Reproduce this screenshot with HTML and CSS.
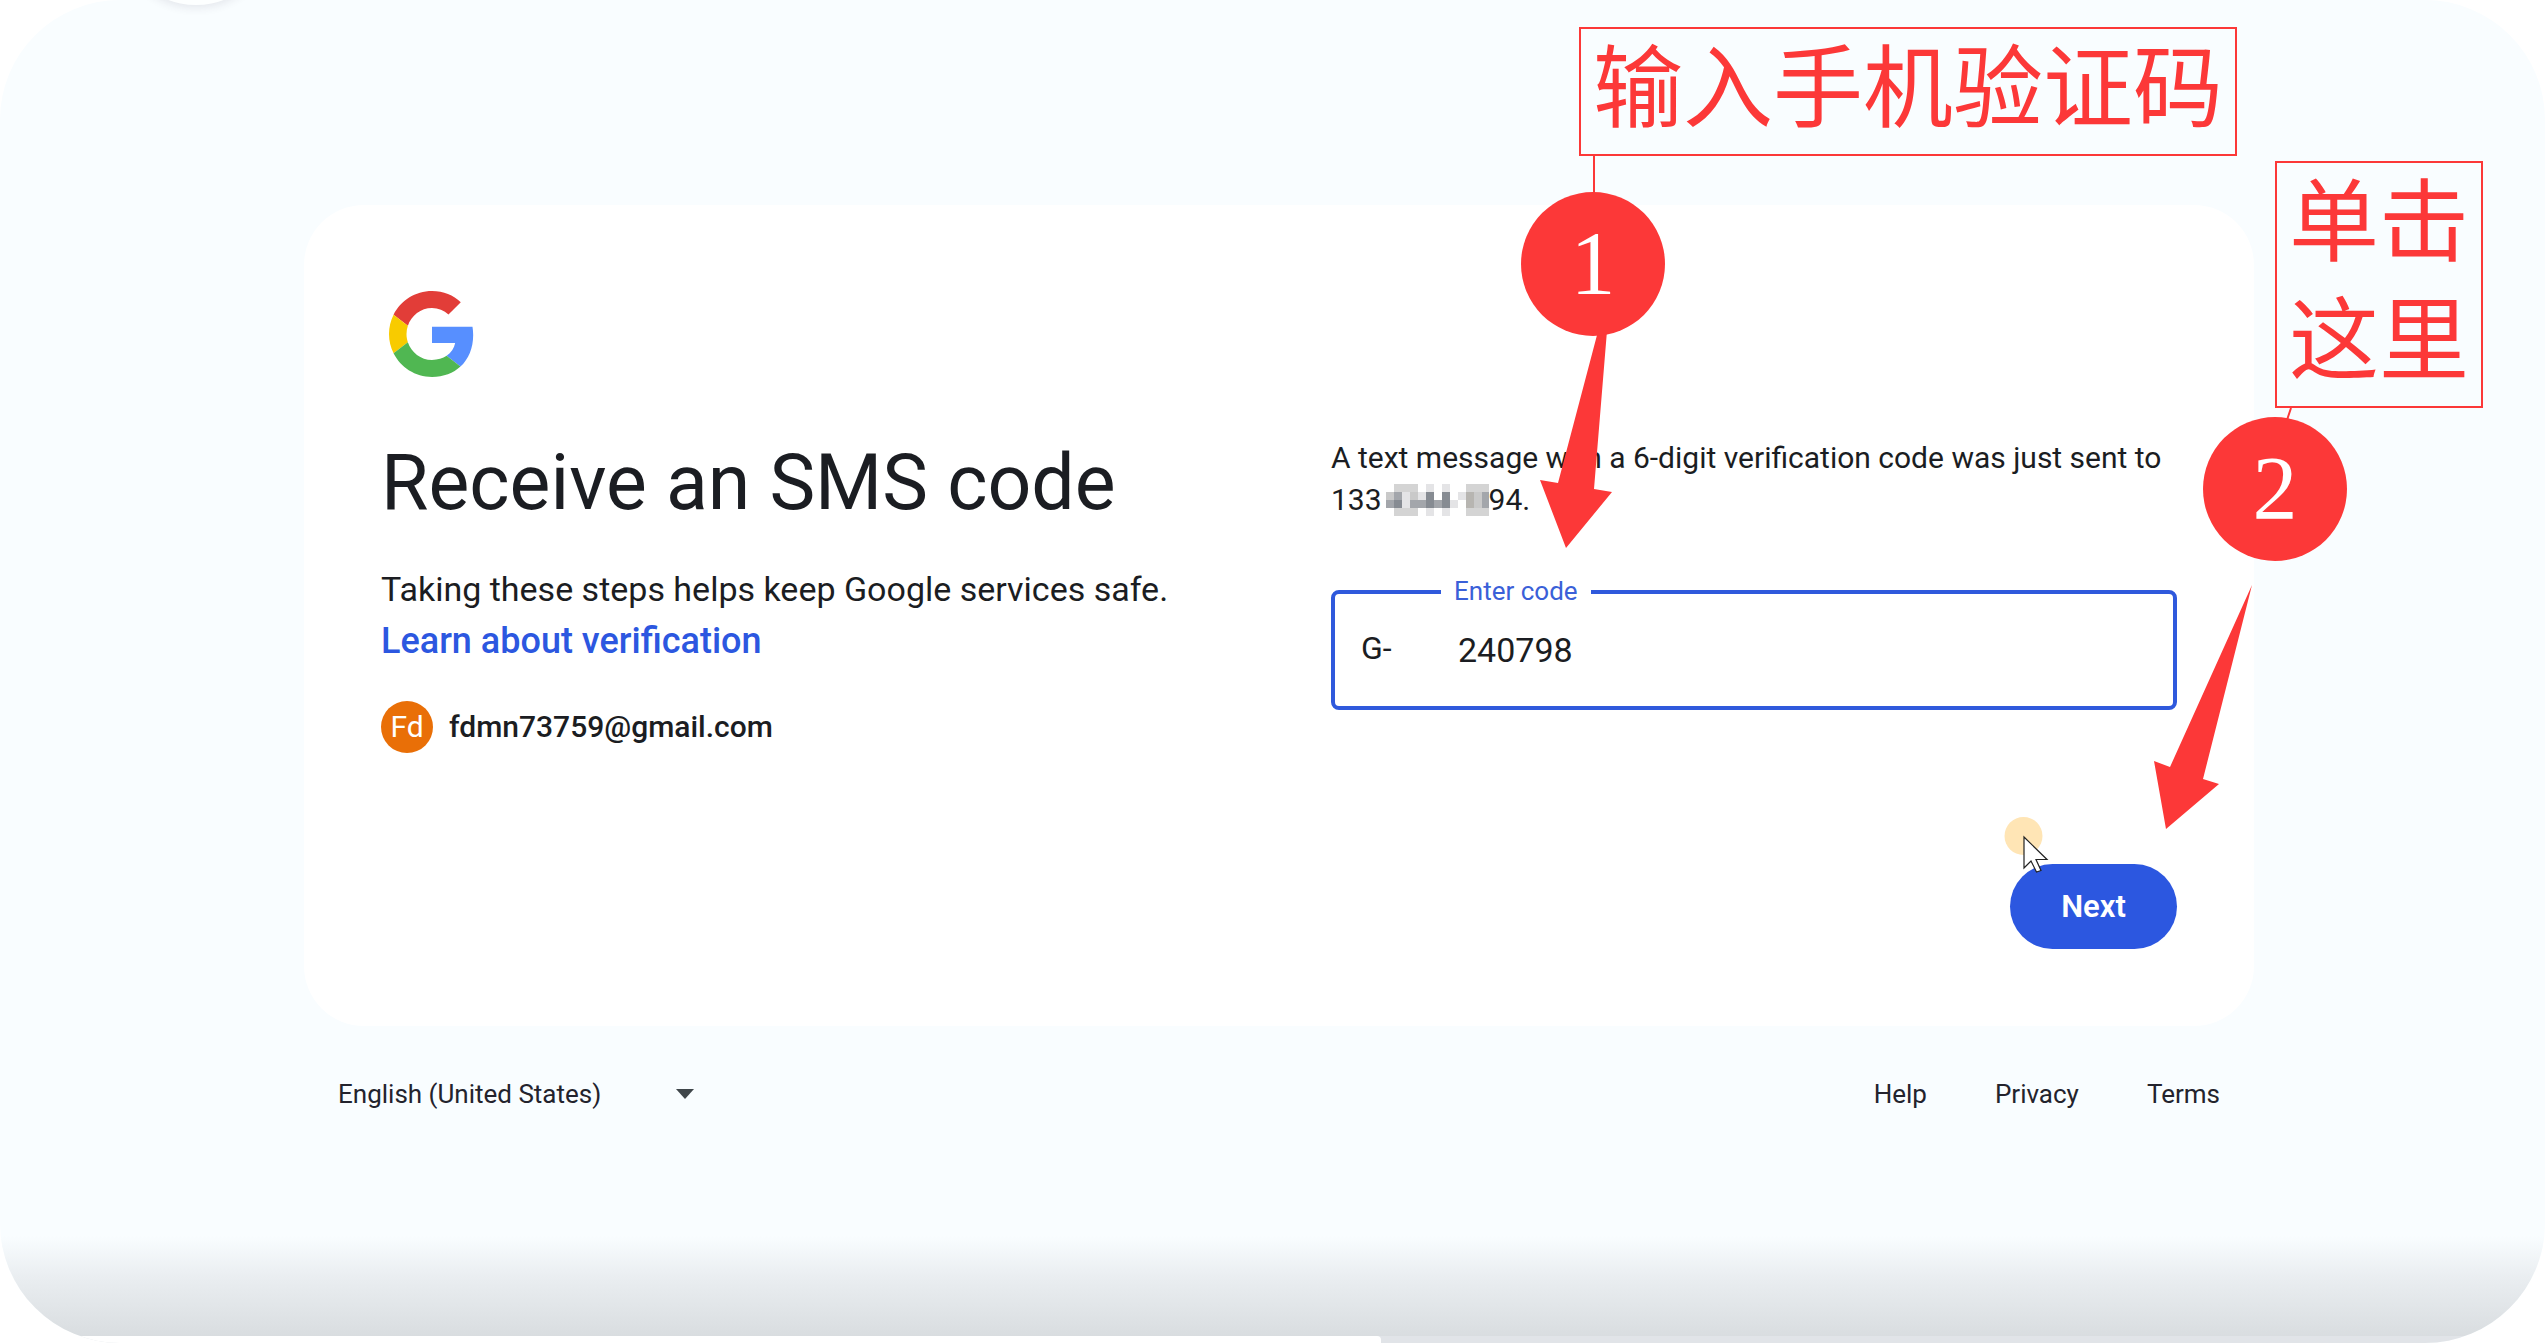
FILE: index.html
```html
<!DOCTYPE html>
<html lang="en">
<head>
<meta charset="utf-8">
<meta name="viewport" content="width=device-width, initial-scale=1">
<title>Receive an SMS code</title>
<link rel="stylesheet" href="styles.css">
</head>
<body>
<div class="page">
  <div class="loader"></div>
  <main class="card">
    <svg class="logo" viewBox="0 0 48 48" role="img" aria-label="Google">
      <path fill="#e23d38" d="M24 9.500c3.540 0 6.710 1.220 9.210 3.600l6.850-6.850C35.900 2.380 30.470 0 24 0 14.620 0 6.510 5.380 2.560 13.220l7.980 6.190C12.430 13.720 17.740 9.500 24 9.500z"/>
      <path fill="#578fff" d="M46.980 24.550c0-1.570-.15-3.090-.38-4.550H24v9.020h12.940c-.58 2.960-2.260 5.480-4.780 7.180l7.730 6c4.510-4.180 7.090-10.360 7.090-17.650z"/>
      <path fill="#f8cb00" d="M10.530 28.590c-.48-1.450-.76-2.990-.76-4.590s.27-3.140.76-4.590l-7.980-6.190C.92 16.460 0 20.120 0 24c0 3.880.92 7.540 2.560 10.780l7.970-6.190z"/>
      <path fill="#50b752" d="M24 48c6.480 0 11.930-2.130 15.890-5.810l-7.730-6c-2.150 1.450-4.920 2.300-8.160 2.300-6.260 0-11.570-4.220-13.470-9.910l-7.980 6.190C6.510 42.620 14.620 48 24 48z"/>
    </svg>
    <div class="columns">
      <section class="intro">
        <h1>Receive an SMS code</h1>
        <p class="lead">Taking these steps helps keep Google services safe. <a class="learn" href="#">Learn about verification</a></p>
        <div class="account"><span class="avatar">Fd</span><span class="email">fdmn73759@gmail.com</span></div>
      </section>
      <form class="verify">
        <div class="message">
          <p>A text message with a 6-digit verification code was just sent to</p>
          <p class="phone"><span>133</span>
          <svg class="mosaic" viewBox="0 0 103 32" aria-hidden="true">
            <path fill="#d4d4d4" d="M8 0h24v8H8zM80 0h23v8H80zM8 24h24v8H8zM80 24h23v8H80z"/>
            <path fill="#e4e4e6" d="M40 0h8v8h-8zM56 0h8v8h-8zM40 24h8v8h-8zM56 24h8v8h-8zM32 8h8v8h-8zM72 8h8v8h-8zM16 8h8v16h-8zM64 16h8v8h-8z"/>
            <path fill="#c9c9c9" d="M0 8h8v8H0zM24 8h8v8h-8zM88 8h8v16h-8z"/>
            <path fill="#a3a6ab" d="M8 8h8v8H8zM0 16h8v8H0zM24 16h16v8H24zM48 16h8v8h-8zM96 8h7v16h-7z"/>
            <path fill="#868b92" d="M8 16h8v8H8zM40 8h8v16h-8zM56 8h8v16h-8z"/>
            <path fill="#b7b5b1" d="M80 8h8v16h-8z"/>
          </svg><span>94.</span></p>
        </div>
        <div class="field">
          <label for="code">Enter code</label>
          <span class="prefix">G-</span>
          <input id="code" type="text" value="240798">
        </div>
        <button class="next" type="button">Next</button>
      </form>
    </div>
  </main>
  <footer class="footer">
    <button class="language" type="button">English (United States)<svg viewBox="0 0 18 10" aria-hidden="true"><path d="M0 0h18L9 10z"/></svg></button>
    <nav class="links"><a href="#">Help</a><a href="#">Privacy</a><a href="#">Terms</a></nav>
  </footer>
  <div class="shade"></div>
  <div class="progress"><div class="progress-done"></div></div>

  <svg class="marks" viewBox="0 0 2545 1343" aria-hidden="true">
    <g fill="#fc3838">
      <path d="M1611 282L1558 483L1540 480L1566 548L1612 492L1594 489Z"/>
      <path d="M2252 585L2170 767L2154 761L2166 829L2219 784L2203 779Z"/>
    </g>
    <path d="M1594 156V194M2291 408L2287 420" stroke="#fc3838" stroke-width="2"/>
    <circle cx="2023.500" cy="836" r="19" fill="#ffe5b5"/>
    <path d="M2024 837V868L2031 861L2036.500 872L2041 870.500L2036 859.500H2047Z" fill="#fff" stroke="#222" stroke-width="1.200"/>
  </svg>
  <span class="step step-one">1</span>
  <span class="step step-two">2</span>
  <div class="note note-one" lang="zh-CN"><span>输入手机验证码</span></div>
  <div class="note note-two" lang="zh-CN"><span>单击</span><span>这里</span></div>
</div>
</body>
</html>
```
FILE: styles.css
```css
* { box-sizing: border-box; }

body {
  margin: 0;
  background: #fff;
  color: #1b1d22;
  font-family: Roboto, "Noto Sans", sans-serif;
}

.page {
  position: relative;
  display: flex;
  flex-direction: column;
  min-height: 100vh;
  padding: 205px 291px 0 304px;
  background: #f9fdff;
  border-radius: 120px;
  overflow: hidden;
}

.loader {
  position: absolute;
  top: -155px;
  left: 116px;
  width: 160px;
  height: 160px;
  border-radius: 50%;
  background: #fdffff;
  box-shadow: 0 3px 8px rgba(60, 50, 80, 0.1);
}

.card {
  display: flex;
  flex-direction: column;
  min-height: 821px;
  padding: 86px 77px 77px;
  border-radius: 60px;
  background: #fff;
}

.logo {
  width: 86px;
  height: 86px;
  margin-left: 8px;
}

.columns {
  display: grid;
  grid-template-columns: 1fr 1fr;
  gap: 104px;
  flex: 1;
  padding-top: 60px;
}

h1 {
  margin: 0;
  font-size: 77px;
  font-weight: 400;
  line-height: 92px;
}

.lead {
  margin: 34px 0 0;
  font-size: 34px;
  line-height: 52px;
}

.learn {
  display: block;
  width: fit-content;
  color: #2c57e0;
  font-size: 36px;
  font-weight: 500;
  text-decoration: none;
}

.account {
  display: flex;
  align-items: center;
  gap: 16px;
  margin-top: 34px;
}

.avatar {
  width: 52px;
  height: 52px;
  border-radius: 50%;
  background: #e96f07;
  color: #fff;
  font-size: 30px;
  line-height: 52px;
  text-align: center;
}

.email {
  font-size: 30px;
  font-weight: 500;
  line-height: 42px;
}

.verify {
  display: flex;
  flex-direction: column;
}

.message {
  font-size: 30px;
  line-height: 42px;
}

.message p {
  margin: 0;
}

.phone {
  display: flex;
  align-items: center;
}

.mosaic {
  width: 103px;
  height: 32px;
  margin-left: 4px;
}

.field {
  position: relative;
  display: flex;
  align-items: center;
  height: 120px;
  margin-top: 69px;
  padding: 0 26px;
  border: 4px solid #2f59dc;
  border-radius: 8px;
}

.field label {
  position: absolute;
  top: -20px;
  left: 106px;
  padding: 0 13px;
  background: #fff;
  color: #3a60d8;
  font-size: 26px;
  line-height: 34px;
}

.prefix {
  width: 97px;
  padding-bottom: 4px;
  font-size: 32px;
}

.field input {
  flex: 1;
  min-width: 0;
  padding: 0;
  border: 0;
  outline: 0;
  background: none;
  color: inherit;
  font-family: inherit;
  font-size: 34px;
}

.next {
  align-self: flex-end;
  width: 167px;
  height: 85px;
  margin-top: auto;
  border: 0;
  border-radius: 43px;
  background: #2c57e0;
  color: #fff;
  font-family: inherit;
  font-size: 31px;
  font-weight: 600;
}

.footer {
  display: flex;
  align-items: center;
  justify-content: space-between;
  padding: 47px 34px 0;
}

.language {
  display: flex;
  align-items: center;
  justify-content: space-between;
  width: 356px;
  padding: 0;
  border: 0;
  background: none;
  color: #23232d;
  font-family: inherit;
  font-size: 26px;
  line-height: 42px;
}

.language svg {
  width: 18px;
  height: 10px;
  fill: #3f464a;
}

.links {
  display: flex;
  gap: 68px;
}

.links a {
  color: #23232d;
  font-size: 26px;
  line-height: 42px;
  text-decoration: none;
}

.shade {
  height: 100px;
  margin: auto -291px 0 -304px;
  background: linear-gradient(#f9fdff, #eaeef1 40%, #d9dde0);
}

.progress {
  height: 7px;
  margin: 0 -291px 0 -304px;
  background: #e1e4e8;
}

.progress-done {
  width: 1381px;
  height: 7px;
  border-top-right-radius: 4px;
  background: #fff;
}

.marks {
  position: absolute;
  top: 0;
  left: 0;
  width: 2545px;
  height: 1343px;
}

.step {
  position: absolute;
  width: 144px;
  height: 144px;
  border-radius: 50%;
  background: #fc3838;
  color: #fff;
  font-family: "Liberation Serif", serif;
  font-size: 90px;
  line-height: 144px;
  text-align: center;
}

.step-one { top: 192px; left: 1521px; }
.step-two { top: 417px; left: 2203px; }

.note {
  position: absolute;
  display: grid;
  gap: 14px;
  padding: 0 12px 21px;
  border: 2px solid #fc3838;
  color: #fc3838;
  font-family: "Noto Sans CJK SC", sans-serif;
  font-size: 90px;
  line-height: 104px;
  white-space: nowrap;
}

.note-one { top: 27px; left: 1579px; }
.note-two { top: 161px; left: 2275px; }
```
